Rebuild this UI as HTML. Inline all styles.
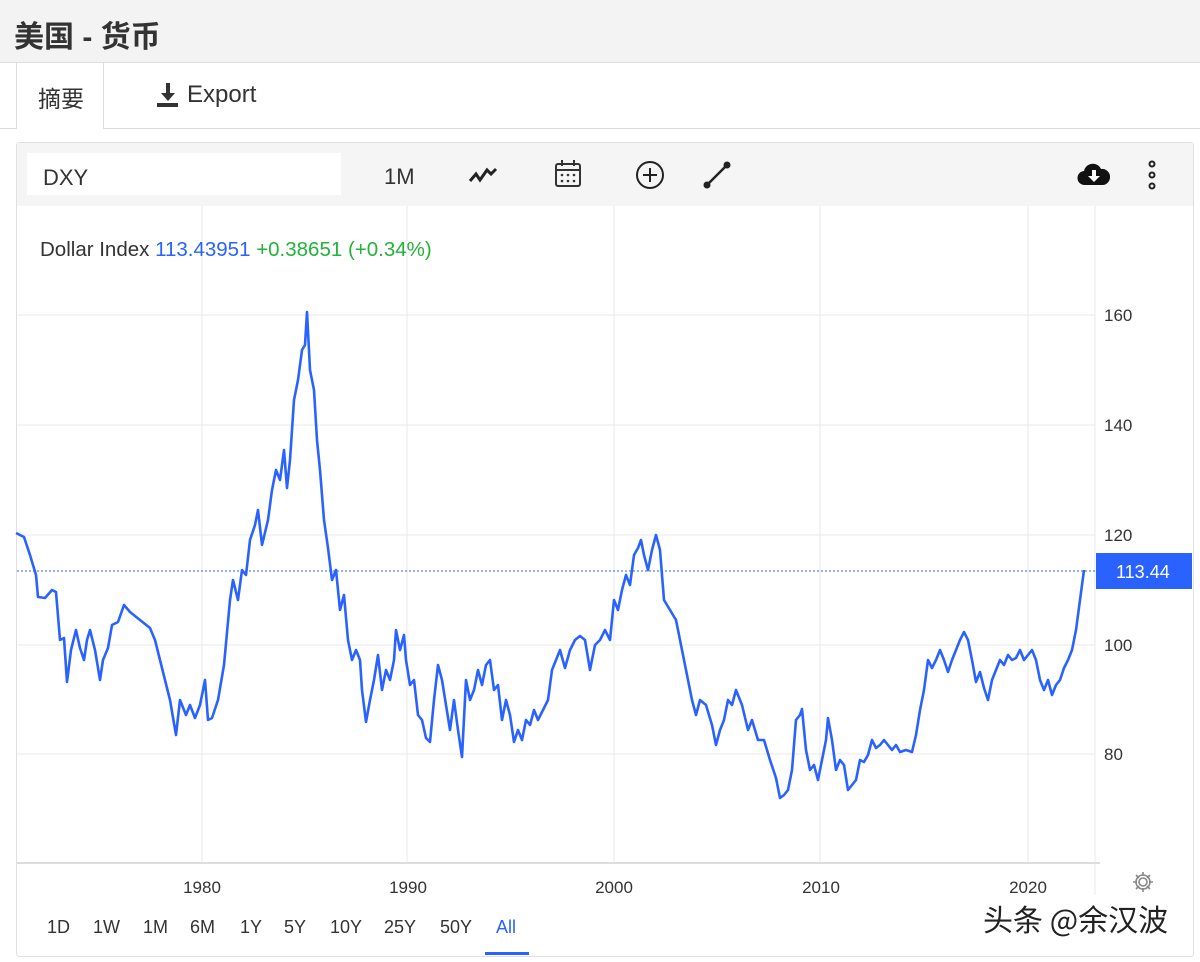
<!DOCTYPE html>
<html><head><meta charset="utf-8"><style>
body{margin:0;width:1200px;height:962px;background:#fff;font-family:"Liberation Sans","Noto Sans CJK SC",sans-serif;position:relative;overflow:hidden;color:#333}
.hdr{position:absolute;left:0;top:0;width:1200px;height:62px;background:#f3f3f3;border-bottom:1px solid #ddd}
.hdr span{position:absolute;left:14px;top:12px;font-size:30px;font-weight:bold;color:#333}
.tabs{position:absolute;left:0;top:63px;width:1200px;height:65px;border-bottom:1px solid #ddd}
.tab1{position:absolute;left:16px;top:0;width:86px;height:66px;background:#fff;border-left:1px solid #ddd;border-right:1px solid #ddd}
.panel{position:absolute;left:16px;top:142px;width:1176px;height:813px;border:1px solid #e0e0e0;border-radius:3px}
.tb{position:absolute;left:0;top:0;width:1176px;height:63px;background:#f5f5f5}
.t{position:absolute;white-space:nowrap}
</style></head><body>
<div class="hdr"><span>美国 - 货币</span></div>
<div class="tabs"><div class="tab1"></div>
<div class="t" style="left:38px;top:17px;font-size:23px;color:#333">摘要</div>
<svg class="t" style="left:156px;top:19px" width="24" height="26" viewBox="0 0 24 26"><path d="M10 1h4v10h5l-7 8-7-8h5z" fill="#333"/><rect x="1" y="21" width="21" height="4" fill="#333"/></svg>
<div class="t" style="left:187px;top:18px;font-size:24px;color:#333">Export</div>
</div>
<div class="panel"><div class="tb"></div>
<div class="t" style="left:10px;top:10px;width:314px;height:42px;background:#fff"></div>
<div class="t" style="left:26px;top:22px;font-size:22px;color:#333">DXY</div>
<div class="t" style="left:367px;top:21px;font-size:22px;color:#333">1M</div>
<svg class="t" style="left:450px;top:20px" width="32" height="24"><path d="M3 18l6-7 4 6 7-10 4 4 5-5" fill="none" stroke="#222" stroke-width="3"/></svg>
<svg class="t" style="left:536px;top:16px" width="30" height="30"><rect x="3" y="5" width="24" height="22" rx="2" fill="none" stroke="#333" stroke-width="2"/><line x1="3" y1="11" x2="27" y2="11" stroke="#333" stroke-width="2"/><line x1="9" y1="1" x2="9" y2="7" stroke="#333" stroke-width="2"/><line x1="21" y1="1" x2="21" y2="7" stroke="#333" stroke-width="2"/><g fill="#333"><circle cx="9" cy="16" r="1.3"/><circle cx="15" cy="16" r="1.3"/><circle cx="21" cy="16" r="1.3"/><circle cx="9" cy="22" r="1.3"/><circle cx="15" cy="22" r="1.3"/><circle cx="21" cy="22" r="1.3"/></g></svg>
<svg class="t" style="left:618px;top:17px" width="30" height="30"><circle cx="15" cy="15" r="13" fill="none" stroke="#222" stroke-width="2"/><path d="M15 8v14M8 15h14" stroke="#222" stroke-width="2"/></svg>
<svg class="t" style="left:685px;top:17px" width="30" height="30"><line x1="5" y1="25" x2="25" y2="5" stroke="#222" stroke-width="2.5"/><circle cx="5" cy="25" r="3.5" fill="#222"/><circle cx="25" cy="5" r="3.5" fill="#222"/></svg>
<svg class="t" style="left:1060px;top:18px" width="34" height="26"><path d="M8 24a7 7 0 0 1-1-14 9 9 0 0 1 17-2 7 7 0 0 1 2 16z" fill="#111"/><path d="M15 9h4v6h4l-6 6-6-6h4z" fill="#fff"/></svg>
<svg class="t" style="left:1128px;top:16px" width="14" height="32"><g fill="none" stroke="#222" stroke-width="2"><circle cx="7" cy="5" r="2.5"/><circle cx="7" cy="16" r="2.5"/><circle cx="7" cy="27" r="2.5"/></g></svg>
</div>
<svg class="t" style="left:0;top:0" width="1200" height="962">
<g stroke="#e8e8e8" stroke-width="1">
<line x1="202" y1="206" x2="202" y2="862"/><line x1="407" y1="206" x2="407" y2="862"/><line x1="614" y1="206" x2="614" y2="862"/><line x1="820" y1="206" x2="820" y2="862"/><line x1="1028" y1="206" x2="1028" y2="862"/><line x1="1095" y1="206" x2="1095" y2="895"/>
<line x1="17" y1="315" x2="1095" y2="315"/><line x1="17" y1="425" x2="1095" y2="425"/><line x1="17" y1="535" x2="1095" y2="535"/><line x1="17" y1="645" x2="1095" y2="645"/><line x1="17" y1="754" x2="1095" y2="754"/>
</g>
<line x1="17" y1="863" x2="1100" y2="863" stroke="#ddd" stroke-width="2"/>
<line x1="17" y1="571" x2="1095" y2="571" stroke="#2962ff" stroke-width="1" stroke-dasharray="2,2"/>
<polyline fill="none" stroke="#2962ff" stroke-width="2.6" stroke-linejoin="round" points="16,533 24,537 30,555 36,575 38,597 45,598 52,590 56,592 60,640 64,638 67,682 71,650 76,630 80,648 84,660 87,640 90,630 95,650 100,680 103,660 108,648 112,625 118,622 124,605 130,612 140,620 150,628 155,640 160,660 165,680 170,700 176,735 180,700 186,715 190,705 195,718 200,705 205,680 208,720 212,718 218,700 224,665 230,600 233,580 238,600 242,570 246,575 250,540 255,525 258,510 262,545 268,520 272,490 276,470 280,480 284,450 287,488 290,460 294,400 298,380 302,350 305,345 307,312 310,370 314,390 317,440 320,470 324,520 328,548 332,580 336,570 340,610 344,595 348,640 352,660 356,650 360,660 362,690 366,722 370,700 374,680 378,655 382,690 386,670 390,680 394,660 396,630 400,650 404,635 406,660 410,685 414,680 418,715 422,720 426,738 430,742 434,700 438,665 442,680 446,705 450,730 454,700 458,730 462,757 466,680 470,700 474,690 478,670 482,685 486,665 490,660 494,690 498,685 502,720 506,700 510,715 514,742 518,730 522,740 526,720 530,725 534,710 538,720 542,712 548,700 552,670 556,660 560,650 565,668 570,650 575,640 580,636 585,640 590,670 595,645 600,640 605,630 610,640 614,600 618,610 622,590 626,575 630,585 634,555 638,548 641,540 644,555 648,570 652,550 656,535 660,550 664,600 670,610 676,620 680,640 684,660 688,680 692,700 696,715 700,700 706,705 712,725 716,745 720,730 724,720 728,700 732,705 736,690 742,705 748,730 752,720 758,740 764,740 770,760 776,778 780,798 784,795 788,790 792,770 796,720 800,715 802,709 806,750 810,770 814,765 818,780 822,760 826,740 828,718 832,740 836,770 840,760 844,765 848,790 852,785 856,780 860,760 864,762 868,755 872,740 876,748 880,745 884,740 888,745 892,750 896,745 900,752 906,750 912,752 916,735 920,710 924,690 928,660 932,668 936,660 940,650 944,660 948,672 952,660 956,650 960,640 964,632 968,640 972,660 976,682 980,672 984,688 988,700 992,680 996,670 1000,660 1004,665 1008,655 1012,660 1016,658 1020,650 1024,660 1028,655 1032,650 1036,660 1040,680 1044,690 1048,680 1052,695 1056,685 1060,680 1064,668 1068,660 1072,650 1076,630 1080,600 1084,570"/>
<rect x="1096" y="553" width="96" height="36" fill="#2962ff"/>
<g font-family="Liberation Sans,sans-serif" font-size="17" fill="#333">
<text x="1104" y="321">160</text><text x="1104" y="431">140</text><text x="1104" y="541">120</text><text x="1104" y="651">100</text><text x="1104" y="760">80</text>
<text x="1116" y="578" fill="#fff" font-size="18">113.44</text>
<text x="202" y="893" text-anchor="middle">1980</text><text x="408" y="893" text-anchor="middle">1990</text><text x="614" y="893" text-anchor="middle">2000</text><text x="821" y="893" text-anchor="middle">2010</text><text x="1028" y="893" text-anchor="middle">2020</text>
<g font-size="18"><text x="47" y="933">1D</text><text x="93" y="933">1W</text><text x="143" y="933">1M</text><text x="190" y="933">6M</text><text x="240" y="933">1Y</text><text x="284" y="933">5Y</text><text x="330" y="933">10Y</text><text x="384" y="933">25Y</text><text x="440" y="933">50Y</text><text x="496" y="933" fill="#2962ff">All</text></g>
<text x="40" y="256" font-size="20.5">Dollar Index <tspan fill="#2962ff">113.43951</tspan>  <tspan fill="#22b33a">+0.38651 (+0.34%)</tspan></text>
</g>
<rect x="485" y="952" width="44" height="3" fill="#2962ff"/>
<g transform="translate(1143,882)" fill="none" stroke="#888" stroke-width="1.6"><circle r="4"/><path d="M0-10v4M0 6v4M-10 0h4M6 0h4M-7-7l3 3M4 4l3 3M-7 7l3-3M4-4l3-3"/><circle r="7"/></g>
<text x="983" y="931" font-family="Noto Sans CJK SC,sans-serif" font-size="30" fill="#222">头条 @余汉波</text>
</svg>
</body></html>
